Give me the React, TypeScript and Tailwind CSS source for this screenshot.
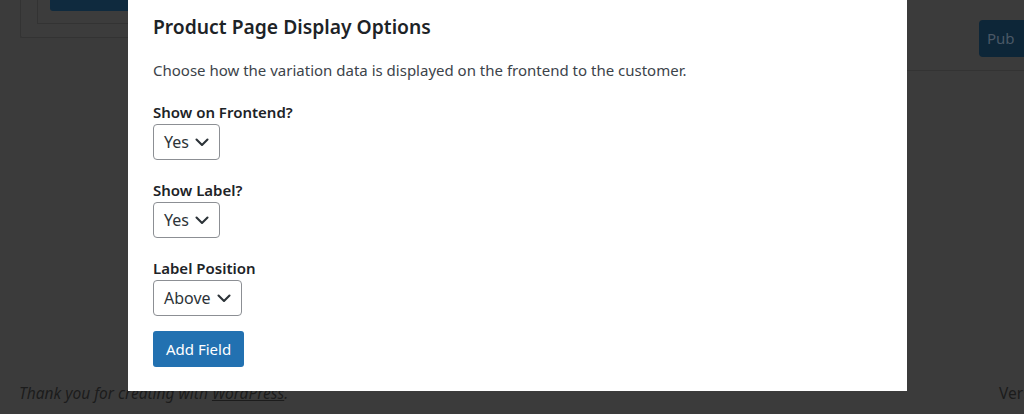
import React from "react";

function Chevron() {
  return (
    <svg width="14" height="14" viewBox="0 0 14 14" className="ml-[6px]" aria-hidden>
      <path d="M1.5 4.5 L7 10 L12.5 4.5" fill="none" stroke="#2c3338" strokeWidth="2.1" strokeLinecap="round" strokeLinejoin="round" />
    </svg>
  );
}

function Select({ value }: { value: string }) {
  return (
    <div className="inline-flex h-[36px] items-center self-start rounded-[4px] border border-[#8c8f94] bg-white pl-[10px] pr-[10px] text-[16px] text-[#2c3338]">
      <span>{value}</span>
      <Chevron />
    </div>
  );
}

function Field({ label, value }: { label: string; value: string }) {
  return (
    <div className="flex flex-col">
      <div className="text-[15px] font-semibold leading-[20px] text-[#1d2327]">{label}</div>
      <div className="mt-[2px] flex">
        <Select value={value} />
      </div>
    </div>
  );
}

export default function App() {
  return (
    <div
      className="relative h-[414px] w-[1024px] overflow-hidden bg-[#3b3b3b]"
      style={{ fontFamily: '"Noto Sans", "Open Sans", sans-serif' }}
    >
      {/* dimmed background page */}
      <div className="flex h-full flex-col">
        <div className="flex flex-1">
          <div className="flex-1 pl-[20px]">
            <div className="h-[38px] rounded-b-[2px] border-b border-l border-[#333333] bg-[#3c3c3c] pl-[16px]">
              <div className="h-[24px] border-b border-l border-[#333333] pl-[12px]">
                <div className="h-[11px] w-[200px] rounded-b-[3px] bg-[#0f2a3e]" />
              </div>
            </div>
          </div>
          <div className="flex w-[117px] flex-col">
            <div className="flex h-[70px] justify-end pt-[20px]">
              <div className="h-[37px] w-[45px] rounded-l-[4px] bg-[#0d2638] pl-[8px] pt-[7px] text-[15px] text-[#4a5866]">Pub</div>
            </div>
            <div className="h-px bg-[#333333]" />
          </div>
        </div>
        <div className="flex h-[31px] items-start justify-between pl-[19px] text-[15.5px] leading-[20px] text-[#1c1c1c]">
          <span className="italic">
            Thank you for creating with <span className="underline">WordPress</span>.
          </span>
          <span className="w-[25px] whitespace-nowrap">Version 6.4</span>
        </div>
      </div>

      {/* modal overlay */}
      <div className="absolute left-[128px] top-0 h-[391px] w-[779px] bg-white pl-[25px] pt-[14px]">
        <h2 className="text-[19.3px] font-semibold leading-[26px] text-[#1d2327]">Product Page Display Options</h2>
        <p className="mt-[20px] text-[15px] leading-[20px] text-[#3c434a]">
          Choose how the variation data is displayed on the frontend to the customer.
        </p>
        <div className="mt-[22px] flex flex-col gap-[20px]">
          <Field label="Show on Frontend?" value="Yes" />
          <Field label="Show Label?" value="Yes" />
          <Field label="Label Position" value="Above" />
        </div>
        <button className="mt-[15px] h-[36px] rounded-[3px] bg-[#2271b1] px-[13px] text-[15px] text-white">
          Add Field
        </button>
      </div>
    </div>
  );
}
